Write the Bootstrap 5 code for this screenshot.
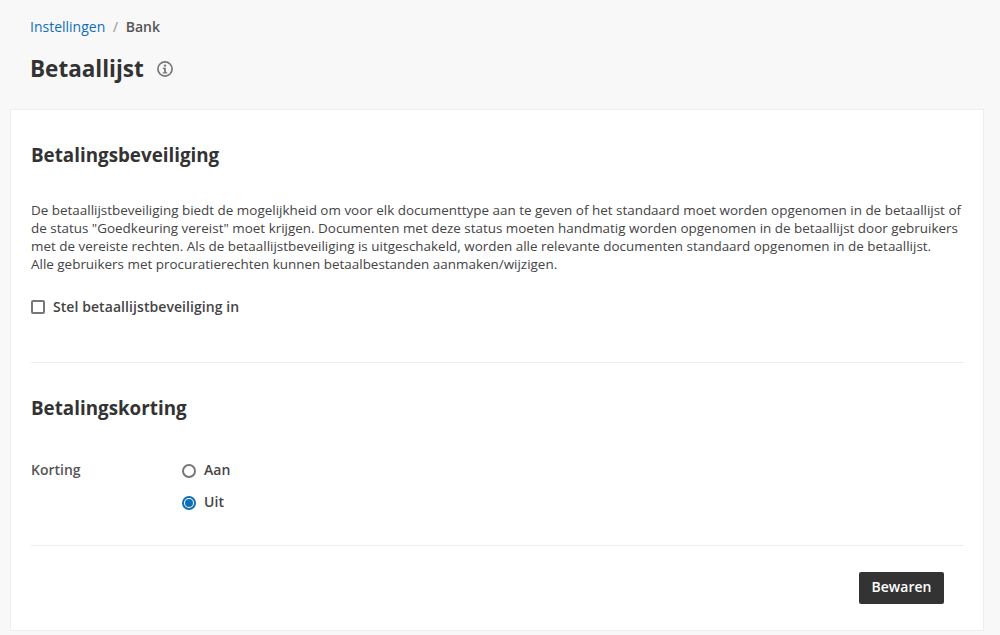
<!doctype html>
<html lang="nl">
<head>
  <meta charset="utf-8">
  <title>Betaallijst</title>
  <link href="https://cdn.jsdelivr.net/npm/bootstrap@5.3.0/dist/css/bootstrap.min.css" rel="stylesheet">
  <style>
    body {
      background: #f8f8f8;
      color: #333;
      font-family: "Open Sans", "Noto Sans", sans-serif;
      font-size: 13.44px;
      overflow: hidden;
    }
    .page-head { padding: 18px 30px 0; height: 109px; }
    .breadcrumb { margin-bottom: 0; font-size: 14px; line-height: 18px; --bs-breadcrumb-item-padding-x: 7.5px; --bs-breadcrumb-divider-color: #aaa; }
    .breadcrumb a { color: #0f6fb5; text-decoration: none; }
    .breadcrumb-item.active { color: #555; font-weight: 600; }
    .page-title { font-size: 22.5px; font-weight: 700; line-height: 32px; margin: 0; color: #333; }
    .title-row { margin-top: 17px; gap: 13.5px; }
    .panel {
      margin: 0 16px 0 10px;
      height: 522px;
      background: #fff;
      border: 1px solid #eee;
      padding: 0 20px;
    }
    .section-title { font-size: 18.8px; font-weight: 700; line-height: 26px; margin: 0; color: #333; }
    .intro { line-height: 18px; margin: 0; color: #444; }
    .rule { border-top: 1px solid #eee; opacity: 1; margin: 0; width: 933px; }
    .check-box { width: 14px; height: 14px; border: 2px solid #777; border-radius: 2px; flex-shrink: 0; }
    .radio-off, .radio-on { width: 14px; height: 14px; border-radius: 50%; flex-shrink: 0; margin-top: 1px; }
    .radio-off { border: 2px solid #777; }
    .radio-on { border: 2px solid #0f6fb5; padding: 1px; }
    .radio-on span { display: block; width: 8px; height: 8px; border-radius: 50%; background: #0f6fb5; }
    .field-text { font-size: 14px; font-weight: 600; letter-spacing: .07px; color: #444; line-height: 18px; }
    .field-name { width: 151px; font-size: 14px; font-weight: 600; color: #555; line-height: 18px; }
    .btn-save {
      background: #333; color: #fff; border: 0; border-radius: 2px;
      width: 85px; height: 32px; padding: 0 0 3px; font-size: 14px; font-weight: 600;
    }
    .sec-one { padding-top: 32px; }
    .intro-wrap { padding-top: 33px; }
    .check-row { padding-top: 25px; padding-bottom: 46px; }
    .sec-two { padding-top: 32px; }
    .radios { padding-top: 40px; padding-bottom: 34px; }
    .radio-stack { gap: 14px; }
    .save-row { padding: 26px 20px 0 0; width: 933px; }
  </style>
</head>
<body>
  <div class="page-head">
    <nav aria-label="breadcrumb">
      <ol class="breadcrumb">
        <li class="breadcrumb-item"><a href="#">Instellingen</a></li>
        <li class="breadcrumb-item active" aria-current="page">Bank</li>
      </ol>
    </nav>
    <div class="title-row d-flex align-items-center">
      <h1 class="page-title">Betaallijst</h1>
      <svg width="16" height="16" viewBox="0 0 16 16" fill="none">
        <circle cx="8" cy="8" r="7.1" stroke="#777" stroke-width="1.7"/>
        <circle cx="8" cy="4.6" r="1.2" fill="#777"/>
        <path d="M5.8 6.8h3.1v4.5h1.3v1.2H5.8v-1.2h1.3V8H5.8z" fill="#777"/>
      </svg>
    </div>
  </div>
  <div class="panel">
    <div class="sec-one">
      <h2 class="section-title">Betalingsbeveiliging</h2>
      <div class="intro-wrap">
        <p class="intro">De betaallijstbeveiliging biedt de mogelijkheid om voor elk documenttype aan te geven of het standaard moet worden opgenomen in de betaallijst of<br>de status "Goedkeuring vereist" moet krijgen. Documenten met deze status moeten handmatig worden opgenomen in de betaallijst door gebruikers<br>met de vereiste rechten. Als de betaallijstbeveiliging is uitgeschakeld, worden alle relevante documenten standaard opgenomen in de betaallijst.<br>Alle gebruikers met procuratierechten kunnen betaalbestanden aanmaken/wijzigen.</p>
      </div>
      <div class="check-row d-flex align-items-center gap-2">
        <span class="check-box"></span>
        <span class="field-text">Stel betaallijstbeveiliging in</span>
      </div>
    </div>
    <hr class="rule">
    <div class="sec-two">
      <h2 class="section-title">Betalingskorting</h2>
      <div class="radios d-flex">
        <div class="field-name">Korting</div>
        <div class="radio-stack d-flex flex-column">
          <div class="d-flex align-items-center gap-2"><span class="radio-off"></span><span class="field-text">Aan</span></div>
          <div class="d-flex align-items-center gap-2"><span class="radio-on"><span></span></span><span class="field-text">Uit</span></div>
        </div>
      </div>
    </div>
    <hr class="rule">
    <div class="save-row d-flex justify-content-end">
      <button type="button" class="btn btn-save">Bewaren</button>
    </div>
  </div>
  <script src="https://cdn.jsdelivr.net/npm/bootstrap@5.3.0/dist/js/bootstrap.bundle.min.js"></script>
</body>
</html>
